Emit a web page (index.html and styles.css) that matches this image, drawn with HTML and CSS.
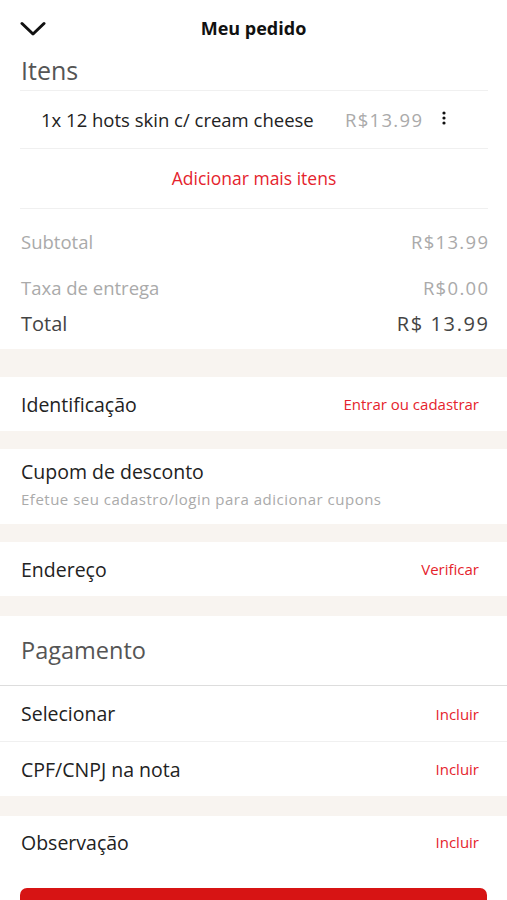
FILE: index.html
```html
<!DOCTYPE html>
<html lang="pt-BR">
    <head>
        <meta charset="UTF-8" />
        <meta name="viewport" content="width=device-width, initial-scale=1.0" />
        <title>Meu pedido</title>
        <link rel="stylesheet" href="styles.css" />
    </head>
    <body>
        <div class="page">
            <header class="header">
                <button class="back" aria-label="Fechar">
                    <svg width="26" height="16" viewBox="0 0 26 16">
                        <path d="M2 2.5 L13 13 L24 2.5" fill="none" stroke="#111" stroke-width="3" stroke-linecap="round" stroke-linejoin="round" />
                    </svg>
                </button>
                <h1 class="header-title">Meu pedido</h1>
            </header>

            <section class="items">
                <h2 class="items-title">Itens</h2>
                <div class="item-row">
                    <span class="item-name">1x 12 hots skin c/ cream cheese</span>
                    <span class="item-price price">R$13.99</span>
                    <span class="item-menu">
                        <svg width="4" height="14" viewBox="0 0 4 14">
                            <circle cx="2" cy="2" r="1.6" fill="#111" />
                            <circle cx="2" cy="7" r="1.6" fill="#111" />
                            <circle cx="2" cy="12" r="1.6" fill="#111" />
                        </svg>
                    </span>
                </div>
                <div class="add-row">Adicionar mais itens</div>

                <div class="totals">
                    <div class="total-line sub">
                        <span>Subtotal</span>
                        <span class="price">R$13.99</span>
                    </div>
                    <div class="total-line fee">
                        <span>Taxa de entrega</span>
                        <span class="price">R$0.00</span>
                    </div>
                    <div class="total-line grand">
                        <span>Total</span>
                        <span class="price">R$ 13.99</span>
                    </div>
                </div>
            </section>

            <div class="band band-lg"></div>

            <div class="row">
                <span class="row-label">Identificação</span>
                <span class="row-action">Entrar ou cadastrar</span>
            </div>

            <div class="band"></div>

            <div class="coupon">
                <span class="row-label">Cupom de desconto</span>
                <span class="coupon-hint">Efetue seu cadastro/login para adicionar cupons</span>
            </div>

            <div class="band"></div>

            <div class="row">
                <span class="row-label">Endereço</span>
                <span class="row-action">Verificar</span>
            </div>

            <div class="band band-md"></div>

            <div class="payment-title">Pagamento</div>

            <div class="row row-line">
                <span class="row-label">Selecionar</span>
                <span class="row-action">Incluir</span>
            </div>
            <div class="row">
                <span class="row-label">CPF/CNPJ na nota</span>
                <span class="row-action">Incluir</span>
            </div>

            <div class="band band-md"></div>

            <div class="row row-note">
                <span class="row-label">Observação</span>
                <span class="row-action">Incluir</span>
            </div>

            <div class="footer">
                <button class="checkout" aria-label="Finalizar pedido"></button>
            </div>
        </div>
    </body>
</html>
```

FILE: styles.css
```css
body {
    margin: 0;
    font-family: "Open Sans", Lato, sans-serif;
    background-color: #fff;
    color: #333;
}

.page {
    width: 507px;
    overflow: hidden;
}

.header {
    position: relative;
    display: flex;
    align-items: center;
    justify-content: center;
    height: 56px;
}

.back {
    position: absolute;
    left: 20px;
    top: 21px;
    padding: 0;
    border: none;
    background: none;
    line-height: 0;
}

.header-title {
    margin: 0;
    font-size: 18px;
    font-weight: 700;
    color: #111;
}

.items {
    padding: 0 19px 0 20px;
}

.items-title {
    margin: 0;
    height: 34px;
    line-height: 28px;
    padding-left: 1px;
    font-size: 25px;
    font-weight: 400;
    color: #555;
    border-bottom: 1px solid #f0f0f0;
}

.price {
    letter-spacing: 1.3px;
}

.item-row {
    display: flex;
    align-items: center;
    height: 57px;
    padding: 0 42px 0 21px;
    border-bottom: 1px solid #f0f0f0;
    font-size: 18.5px;
}

.item-name {
    flex: 1;
    color: #222;
}

.item-price {
    color: #aaa;
    margin-right: -1.3px;
}

.item-menu {
    margin-left: 20px;
    margin-top: -4px;
    line-height: 0;
}

.add-row {
    height: 59px;
    line-height: 59px;
    text-align: center;
    font-size: 17.5px;
    color: #e5232d;
    border-bottom: 1px solid #f0f0f0;
}

.totals {
    padding: 9px 0 14px 1px;
}

.total-line {
    display: flex;
    justify-content: space-between;
    align-items: center;
}

.total-line .price {
    margin-right: -1.3px;
}

.total-line.sub,
.total-line.fee {
    height: 46px;
    font-size: 18.5px;
    color: #aaa;
}

.total-line.fee {
    height: 47px;
}

.total-line.grand {
    height: 24px;
    font-size: 20px;
    color: #444;
}

.total-line.grand .price {
    letter-spacing: 1.6px;
    margin-right: -1.6px;
}

.band {
    height: 18px;
    background-color: #f8f4f0;
}

.band-lg {
    height: 28px;
}

.band-md {
    height: 20px;
}

.row {
    display: flex;
    justify-content: space-between;
    align-items: center;
    height: 54px;
    padding: 0 28px 0 21px;
}

.row-line {
    height: 55px;
    border-bottom: 1px solid #f0f0f0;
}

.row-note {
    height: 52px;
}

.row-label {
    font-size: 19.5px;
    color: #222;
}

.row-action {
    font-size: 15px;
    color: #e5232d;
}

.coupon {
    display: flex;
    flex-direction: column;
    height: 75px;
    box-sizing: border-box;
    padding: 11px 21px 0;
}

.coupon .row-label {
    line-height: 24px;
}

.coupon-hint {
    margin-top: 6px;
    font-size: 15px;
    line-height: 18px;
    letter-spacing: 0.5px;
    color: #aaa;
}

.payment-title {
    height: 69px;
    line-height: 69px;
    padding-left: 21px;
    font-size: 23.5px;
    color: #555;
    border-bottom: 1px solid #ddd;
}

.footer {
    padding: 20px 20px 20px;
}

.checkout {
    display: block;
    width: 100%;
    height: 52px;
    border: none;
    border-radius: 7px;
    background-color: #d71414;
}
```
